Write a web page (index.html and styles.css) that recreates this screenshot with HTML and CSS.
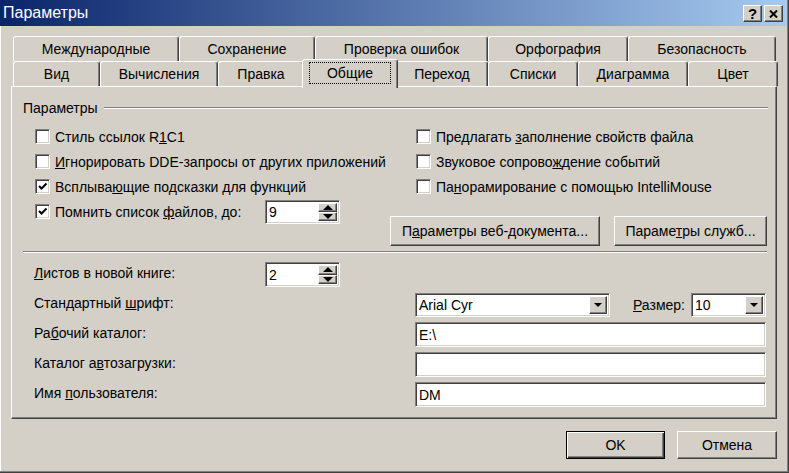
FILE: index.html
```html
<!DOCTYPE html>
<html lang="ru">
<head>
    <meta charset="UTF-8">
    <title>Параметры</title>
    <link rel="stylesheet" href="styles.css">
</head>
<body>
<div class="window">
    <div class="titlebar">
        <span class="title">Параметры</span>
        <div class="caption-btns">
            <span class="cap-btn">?</span>
            <span class="cap-btn">
                <svg width="9" height="8" viewBox="0 0 9 8"><path d="M1 0.5 L8 7.5 M8 0.5 L1 7.5" stroke="#000" stroke-width="2"/></svg>
            </span>
        </div>
    </div>

    <div class="body">
        <div class="tabs">
            <div class="tab-row row-back">
                <div class="tab">Международные</div>
                <div class="tab">Сохранение</div>
                <div class="tab">Проверка ошибок</div>
                <div class="tab">Орфография</div>
                <div class="tab">Безопасность</div>
            </div>
            <div class="tab-row row-front">
                <div class="tab">Вид</div>
                <div class="tab">Вычисления</div>
                <div class="tab">Правка</div>
                <div class="tab active"><span class="focus">Общие</span></div>
                <div class="tab">Переход</div>
                <div class="tab">Списки</div>
                <div class="tab">Диаграмма</div>
                <div class="tab">Цвет</div>
            </div>
        </div>

        <div class="panel">
            <div class="group-head">
                <span>Параметры</span>
                <span class="etched"></span>
            </div>

            <div class="options">
                <div class="col-left">
                    <div class="check"><span class="box"></span><span>Стиль ссылок R<u>1</u>C1</span></div>
                    <div class="check"><span class="box"></span><span><u>И</u>гнорировать DDE-запросы от других приложений</span></div>
                    <div class="check"><span class="box on"><svg width="11" height="11" viewBox="0 0 11 11"><path d="M2 5 L4.5 7.5 L9.5 2.5" fill="none" stroke="#000" stroke-width="2"/></svg></span><span>Всплыва<u>ю</u>щие подсказки для функций</span></div>
                    <div class="check spin-row">
                        <span class="spin-label"><span class="box on"><svg width="11" height="11" viewBox="0 0 11 11"><path d="M2 5 L4.5 7.5 L9.5 2.5" fill="none" stroke="#000" stroke-width="2"/></svg></span><span>Помнить список <u>ф</u>айлов, до:</span></span>
                        <div class="spinner field">
                            <span class="value">9</span>
                            <div class="spin-btns">
                                <span class="spin-btn"><span class="tri-up"></span></span>
                                <span class="spin-btn"><span class="tri-down"></span></span>
                            </div>
                        </div>
                    </div>
                </div>
                <div class="col-right">
                    <div class="check"><span class="box"></span><span>Предлагать <u>з</u>аполнение свойств файла</span></div>
                    <div class="check"><span class="box"></span><span>Звуковое сопрово<u>ж</u>дение событий</span></div>
                    <div class="check"><span class="box"></span><span>Па<u>н</u>орамирование с помощью IntelliMouse</span></div>
                    <div class="btn-row">
                        <span class="btn web-btn"><span>П<u>а</u>раметры веб-документа...</span></span>
                        <span class="btn svc-btn"><span>Параме<u>т</u>ры служб...</span></span>
                    </div>
                </div>
            </div>

            <div class="separator"></div>

            <div class="form">
                <label class="lbl"><u>Л</u>истов в новой книге:</label>
                <div class="spinner field">
                    <span class="value">2</span>
                    <div class="spin-btns">
                        <span class="spin-btn"><span class="tri-up"></span></span>
                        <span class="spin-btn"><span class="tri-down"></span></span>
                    </div>
                </div>
                <span></span>

                <label class="lbl wide">Стандартный <u>ш</u>рифт:</label>
                <div class="font-line">
                    <div class="combo field font-combo">
                        <span class="value">Arial Cyr</span>
                        <span class="drop"><span class="tri-down"></span></span>
                    </div>
                    <label class="size-lbl"><u>Р</u>азмер:</label>
                    <div class="combo field size-combo">
                        <span class="value">10</span>
                        <span class="drop"><span class="tri-down"></span></span>
                    </div>
                </div>

                <label class="lbl wide">Ра<u>б</u>очий каталог:</label>
                <div class="field text-field"><span class="value">E:\</span></div>

                <label class="lbl wide">Каталог а<u>в</u>тозагрузки:</label>
                <div class="field text-field"><span class="value"></span></div>

                <label class="lbl wide">Имя <u>п</u>ользователя:</label>
                <div class="field text-field"><span class="value">DM</span></div>
            </div>
        </div>

        <div class="footer">
            <span class="btn default ok-btn">OK</span>
            <span class="btn cancel-btn">Отмена</span>
        </div>
    </div>
</div>
</body>
</html>
```

FILE: styles.css
```css
body {
    margin: 0;
    background: #d4d0c8;
    font-family: "Liberation Sans", Arial, sans-serif;
    font-size: 14px;
    color: #000;
}
.window {
    width: 789px;
    height: 473px;
    box-sizing: border-box;
    background: #d4d0c8;
    box-shadow: inset -1px -1px #404040, inset -2px -2px #808080, inset 1px 0 #fff;
}

/* title bar */
.titlebar {
    height: 26px;
    margin-right: 2px;
    display: flex;
    align-items: center;
    justify-content: space-between;
    padding: 0 4px 0 3px;
    background: linear-gradient(to right, #0a246a, #a6caf0);
}
.title {
    color: #fff;
    font-size: 16px;
}
.caption-btns {
    display: flex;
    gap: 2px;
    margin-top: 1px;
}
.cap-btn {
    width: 19px;
    height: 17px;
    box-sizing: border-box;
    display: flex;
    align-items: center;
    justify-content: center;
    background: #d4d0c8;
    border: 1px solid;
    border-color: #fff #404040 #404040 #fff;
    box-shadow: inset -1px -1px #808080;
    font-weight: bold;
    font-size: 15px;
    line-height: 1;
}

.body {
    padding: 10px 12px 0 11px;
}

/* tabs */
.tabs {
    margin-left: 2px;
}
.tab-row {
    display: grid;
    height: 25px;
}
.row-back {
    grid-template-columns: 166px 136px 173px 140px 148px;
}
.row-front {
    grid-template-columns: 87px 118px 86px 92px 92px 90px 110px 90px;
}
.tab {
    display: flex;
    align-items: center;
    justify-content: center;
    background: #d4d0c8;
    border-top: 1px solid #fff;
    border-left: 1px solid #fff;
    border-right: 1px solid #404040;
    box-shadow: inset -1px 0 #808080;
    border-radius: 3px 3px 0 0;
    padding-bottom: 1px;
}
.tab.active {
    position: relative;
    z-index: 2;
    margin: -2px -2px -2px -2px;
    padding-bottom: 2px;
}
.focus {
    border: 1px dotted #000;
    padding: 2px 17px;
}

/* tab body */
.panel {
    height: 333px;
    box-sizing: border-box;
    border: 1px solid;
    border-color: #fff #404040 #404040 #fff;
    box-shadow: inset -1px -1px #808080;
    padding: 13px 8px 0 11px;
}
.group-head {
    display: flex;
    align-items: center;
    height: 16px;
}
.etched {
    flex: 1;
    margin-left: 6px;
    border-top: 1px solid #808080;
    border-bottom: 1px solid #fff;
}

.options {
    display: flex;
    justify-content: space-between;
    margin-top: 8px;
}
.col-left {
    margin-left: 12px;
}
.col-right {
    width: 377px;
    margin-right: 1px;
}
.col-right .check {
    margin-left: 26px;
}
.check {
    height: 25px;
    display: flex;
    align-items: center;
    white-space: nowrap;
}
.box {
    width: 15px;
    height: 15px;
    box-sizing: border-box;
    margin-right: 5px;
    background: #fff;
    border: 1px solid;
    border-color: #808080 #fff #fff #808080;
    box-shadow: inset 1px 1px #404040, inset -1px -1px #d4d0c8;
    display: flex;
    align-items: center;
    justify-content: center;
    flex-shrink: 0;
}
.spin-label {
    display: flex;
    align-items: center;
    width: 230px;
}

/* sunken fields */
.field {
    box-sizing: border-box;
    background: #fff;
    border: 1px solid;
    border-color: #808080 #fff #fff #808080;
    box-shadow: inset 1px 1px #404040, inset -1px -1px #d4d0c8;
    display: flex;
    align-items: center;
    padding: 2px 2px 2px 3px;
}
.value {
    flex: 1;
}
.spinner {
    width: 75px;
    height: 24px;
}
.spin-btns {
    width: 19px;
    align-self: stretch;
    display: flex;
    flex-direction: column;
}
.spin-btn {
    flex: 1;
    box-sizing: border-box;
    background: #d4d0c8;
    border: 1px solid;
    border-color: #fff #404040 #404040 #fff;
    box-shadow: inset -1px -1px #808080;
    display: flex;
    align-items: center;
    justify-content: center;
}
.tri-up {
    border-left: 5px solid transparent;
    border-right: 5px solid transparent;
    border-bottom: 5px solid #000;
}
.tri-down {
    border-left: 5px solid transparent;
    border-right: 5px solid transparent;
    border-top: 5px solid #000;
}

.btn-row {
    display: flex;
    justify-content: space-between;
    margin-top: 17px;
}
.btn {
    height: 30px;
    box-sizing: border-box;
    display: flex;
    align-items: center;
    justify-content: center;
    background: #d4d0c8;
    border: 1px solid;
    border-color: #fff #404040 #404040 #fff;
    box-shadow: inset -1px -1px #808080;
    white-space: nowrap;
}
.web-btn {
    width: 210px;
}
.svc-btn {
    width: 153px;
}

.separator {
    margin-top: 5px;
    margin-right: 1px;
    border-top: 1px solid #808080;
    border-bottom: 1px solid #fff;
}

/* lower form */
.form {
    display: grid;
    grid-template-columns: 231px 150px 1fr;
    grid-auto-rows: 25px;
    row-gap: 5px;
    margin: 9px 2px 0 11px;
}
.lbl {
    align-self: center;
    padding-bottom: 4px;
    white-space: nowrap;
}
.lbl.wide {
    grid-column: 1 / 3;
}
.form .spinner {
    height: 25px;
}
.font-line {
    display: flex;
    align-items: center;
}
.combo {
    height: 24px;
}
.font-combo {
    width: 195px;
}
.size-combo {
    width: 75px;
}
.size-lbl {
    margin-left: auto;
    margin-right: 6px;
}
.drop {
    width: 18px;
    align-self: stretch;
    box-sizing: border-box;
    background: #d4d0c8;
    border: 1px solid;
    border-color: #fff #404040 #404040 #fff;
    box-shadow: inset -1px -1px #808080;
    display: flex;
    align-items: center;
    justify-content: center;
}
.drop .tri-down {
    border-left-width: 4px;
    border-right-width: 4px;
    border-top-width: 4px;
}
.text-field {
    height: 25px;
}

/* dialog buttons */
.footer {
    display: flex;
    justify-content: flex-end;
    gap: 12px;
    margin-top: 12px;
}
.ok-btn {
    width: 99px;
    height: 28px;
}
.cancel-btn {
    width: 100px;
    height: 28px;
}
.btn.default {
    border: 1px solid #000;
    box-shadow: inset 1px 1px #fff, inset -1px -1px #404040, inset -2px -2px #808080;
}
```
